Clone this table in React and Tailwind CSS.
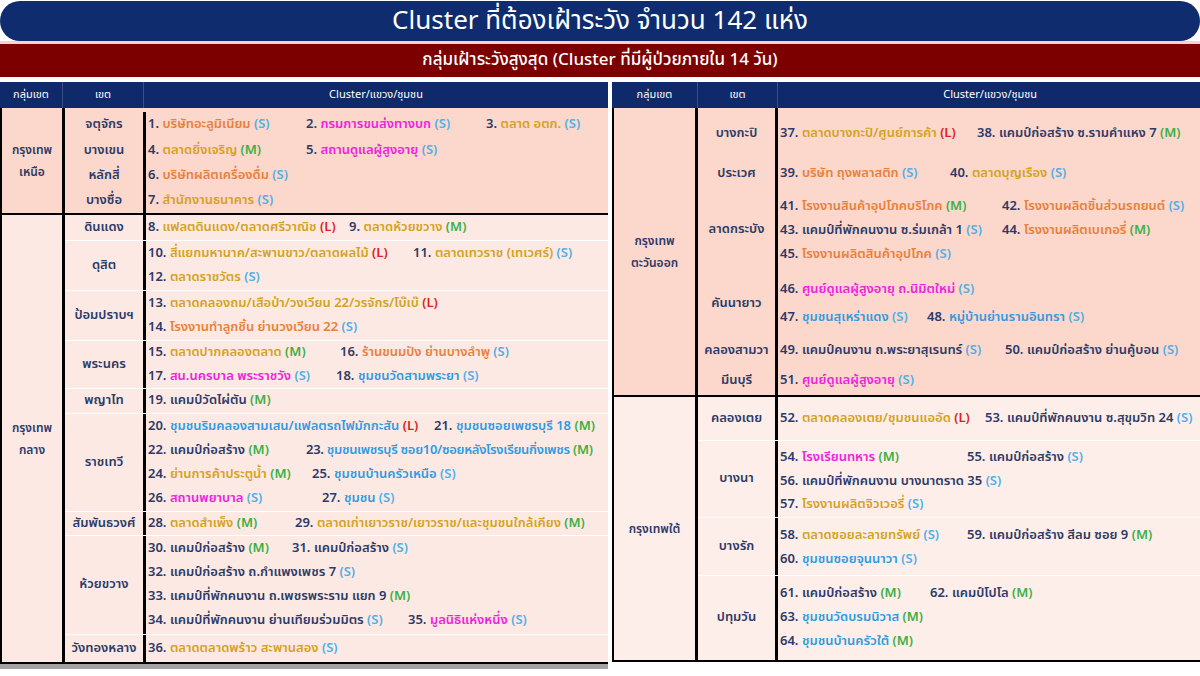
import React from "react";

const col = {
  N: "text-[#2b3a67]",
  O: "text-[#e8803a]",
  P: "text-[#ee22dd]",
  G: "text-[#d4a21c]",
  B: "text-[#2f9be0]",
  S: "text-[#4db0e8]",
  M: "text-[#3cb043]",
  L: "text-[#e02020]",
};

const it = (num, c, name, tag, w = "") => ({ num, c, name, tag, w });

function Item({ d }) {
  return (
    <span className={`inline-block whitespace-nowrap pr-[8px] ${d.w}`}>
      <span className={col.N}>{d.num} </span>
      <span className={col[d.c]}>{d.name}</span>
      <span className={col[d.tag]}> ({d.tag})</span>
    </span>
  );
}

function Row({ label, h, lh, lines, sep, dw, pad = "" }) {
  return (
    <div className={`flex ${h} ${sep ? "border-t border-white" : ""}`}>
      <div className={`${dw} shrink-0 border-r-[3px] border-black flex items-center justify-center text-[#2b3a67] whitespace-nowrap`}>
        {label}
      </div>
      <div className={`flex-1 min-w-0 flex flex-col justify-center pl-[2px] overflow-hidden ${pad}`}>
        {lines.map((l, i) => (
          <div key={i} className={`flex items-center ${lh}`}>
            {l.map((d, j) => (
              <Item key={j} d={d} />
            ))}
          </div>
        ))}
      </div>
    </div>
  );
}

function Group({ label, gw, bg, rows, dw, border, pad = "" }) {
  return (
    <div className={`flex ${bg} ${border}`}>
      <div className={`${gw} shrink-0 border-r-[3px] border-black flex items-center justify-center text-center text-[#2b3a67] text-[12px] leading-[22px]`}>
        {label}
      </div>
      <div className={`flex-1 min-w-0 flex flex-col ${pad}`}>
        {rows.map((r, i) => (
          <Row key={i} {...r} dw={dw} />
        ))}
      </div>
    </div>
  );
}

function Header({ w1, w2 }) {
  return (
    <div className="flex h-[26px] bg-[#0f2a6b] text-white text-[11px]">
      <div className={`${w1} shrink-0 flex items-center justify-center border-r border-[#3b4f85]`}>กลุ่มเขต</div>
      <div className={`${w2} shrink-0 flex items-center justify-center border-r border-[#3b4f85]`}>เขต</div>
      <div className="flex-1 flex items-center justify-center">Cluster/แขวง/ชุมชน</div>
    </div>
  );
}

const north = [
  { label: "จตุจักร", h: "h-[26px]", lh: "h-[26px]", lines: [[it("1.", "O", "บริษัทอะลูมิเนียม", "S", "min-w-[158px]"), it("2.", "P", "กรมการขนส่งทางบก", "S", "min-w-[180px]"), it("3.", "G", "ตลาด อตก.", "S")]] },
  { label: "บางเขน", h: "h-[25px]", lh: "h-[25px]", lines: [[it("4.", "G", "ตลาดยิ่งเจริญ", "M", "min-w-[158px]"), it("5.", "P", "สถานดูแลผู้สูงอายุ", "S")]] },
  { label: "หลักสี่", h: "h-[26px]", lh: "h-[26px]", lines: [[it("6.", "O", "บริษัทผลิตเครื่องดื่ม", "S")]] },
  { label: "บางซื่อ", h: "h-[24px]", lh: "h-[24px]", lines: [[it("7.", "G", "สำนักงานธนาคาร", "S")]] },
];

const central = [
  { label: "ดินแดง", h: "h-[25px]", lh: "h-[24px]", lines: [[it("8.", "G", "แฟลตดินแดง/ตลาดศรีวาณิช", "L", "min-w-[201px]"), it("9.", "G", "ตลาดห้วยขวาง", "M")]] },
  { label: "ดุสิต", h: "h-[50px]", lh: "h-[25px]", sep: true, lines: [[it("10.", "G", "สี่แยกมหานาค/สะพานขาว/ตลาดผลไม้", "L", "min-w-[265px]"), it("11.", "G", "ตลาดเทวราช (เทเวศร์)", "S")], [it("12.", "G", "ตลาดราชวัตร", "S")]] },
  { label: "ป้อมปราบฯ", h: "h-[50px]", lh: "h-[25px]", sep: true, lines: [[it("13.", "G", "ตลาดคลองถม/เสือป่า/วงเวียน 22/วรจักร/โบ๊เบ๊", "L")], [it("14.", "O", "โรงงานทำลูกชิ้น ย่านวงเวียน 22", "S")]] },
  { label: "พระนคร", h: "h-[48px]", lh: "h-[24px]", sep: true, lines: [[it("15.", "G", "ตลาดปากคลองตลาด", "M", "min-w-[192px]"), it("16.", "O", "ร้านขนมปัง ย่านบางลำพู", "S")], [it("17.", "P", "สน.นครบาล พระราชวัง", "S", "min-w-[188px]"), it("18.", "B", "ชุมชนวัดสามพระยา", "S")]] },
  { label: "พญาไท", h: "h-[25px]", lh: "h-[24px]", sep: true, lines: [[it("19.", "N", "แคมป์วัดไผ่ตัน", "M")]] },
  { label: "ราชเทวี", h: "h-[98px]", lh: "h-[24px]", sep: true, lines: [[it("20.", "B", "ชุมชนริมคลองสามเสน/แฟลตรถไฟมักกะสัน", "L", "min-w-[286px]"), it("21.", "B", "ชุมชนซอยเพชรบุรี 18", "M")], [it("22.", "N", "แคมป์ก่อสร้าง", "M", "min-w-[158px]"), it("23.", "B", "ชุมชนเพชรบุรี ซอย10/ซอยหลังโรงเรียนกิ่งเพชร", "M", "tracking-[-0.3px]")], [it("24.", "G", "ย่านการค้าประตูน้ำ", "M", "min-w-[164px]"), it("25.", "B", "ชุมชนบ้านครัวเหนือ", "S")], [it("26.", "P", "สถานพยาบาล", "S", "min-w-[174px]"), it("27.", "B", "ชุมชน", "S")]] },
  { label: "สัมพันธวงศ์", h: "h-[24px]", lh: "h-[23px]", sep: true, lines: [[it("28.", "G", "ตลาดสำเพ็ง", "M", "min-w-[147px]"), it("29.", "G", "ตลาดเก่าเยาวราช/เยาวราช/และชุมชนใกล้เคียง", "M")]] },
  { label: "ห้วยขวาง", h: "h-[99px]", lh: "h-[24px]", sep: true, lines: [[it("30.", "N", "แคมป์ก่อสร้าง", "M", "min-w-[144px]"), it("31.", "N", "แคมป์ก่อสร้าง", "S")], [it("32.", "N", "แคมป์ก่อสร้าง ถ.กำแพงเพชร 7", "S")], [it("33.", "N", "แคมป์ที่พักคนงาน ถ.เพชรพระราม แยก 9", "M")], [it("34.", "N", "แคมป์ที่พักคนงาน ย่านเทียมร่วมมิตร", "S", "min-w-[260px]"), it("35.", "P", "มูลนิธิแห่งหนึ่ง", "S")]] },
  { label: "วังทองหลาง", h: "h-[28px]", lh: "h-[26px]", sep: true, lines: [[it("36.", "G", "ตลาดตลาดพร้าว สะพานสอง", "S")]] },
];

const east = [
  { label: "บางกะปิ", h: "h-[52px]", lh: "h-[24px]", lines: [[it("37.", "G", "ตลาดบางกะปิ/ศูนย์การค้า", "L", "min-w-[197px]"), it("38.", "N", "แคมป์ก่อสร้าง ซ.รามคำแหง 7", "M")]] },
  { label: "ประเวศ", h: "h-[28px]", lh: "h-[24px]", lines: [[it("39.", "O", "บริษัท ถุงพลาสติก", "S", "min-w-[170px]"), it("40.", "G", "ตลาดบุญเรือง", "S")]] },
  { label: "ลาดกระบัง", h: "h-[84px]", lh: "h-[24px]", pad: "pt-[2px]", lines: [[it("41.", "O", "โรงงานสินค้าอุปโภคบริโภค", "M", "min-w-[222px]"), it("42.", "O", "โรงงานผลิตชิ้นส่วนรถยนต์", "S")], [it("43.", "N", "แคมป์ที่พักคนงาน ซ.ร่มเกล้า 1", "S", "min-w-[222px]"), it("44.", "O", "โรงงานผลิตเบเกอรี่", "M")], [it("45.", "O", "โรงงานผลิตสินค้าอุปโภค", "S")]] },
  { label: "คันนายาว", h: "h-[63px]", lh: "h-[28px]", lines: [[it("46.", "P", "ศูนย์ดูแลผู้สูงอายุ ถ.นิมิตใหม่", "S")], [it("47.", "B", "ชุมชนสุเหร่าแดง", "S", "min-w-[147px]"), it("48.", "B", "หมู่บ้านย่านรามอินทรา", "S")]] },
  { label: "คลองสามวา", h: "h-[32px]", lh: "h-[24px]", lines: [[it("49.", "N", "แคมป์คนงาน ถ.พระยาสุเรนทร์", "S", "min-w-[225px]"), it("50.", "N", "แคมป์ก่อสร้าง ย่านคู้บอน", "S")]] },
  { label: "มีนบุรี", h: "h-[28px]", lh: "h-[24px]", lines: [[it("51.", "P", "ศูนย์ดูแลผู้สูงอายุ", "S")]] },
];

const south = [
  { label: "คลองเตย", h: "h-[43px]", lh: "h-[24px]", lines: [[it("52.", "G", "ตลาดคลองเตย/ชุมชนแออัด", "L", "min-w-[205px]"), it("53.", "N", "แคมป์ที่พักคนงาน ซ.สุขุมวิท 24", "S")]] },
  { label: "บางนา", h: "h-[77px]", lh: "h-[24px]", sep: true, pad: "pt-[5px]", lines: [[it("54.", "P", "โรงเรียนทหาร", "M", "min-w-[187px]"), it("55.", "N", "แคมป์ก่อสร้าง", "S")], [it("56.", "N", "แคมป์ที่พักคนงาน บางนาตราด 35", "S")], [it("57.", "G", "โรงงานผลิตจิวเวอรี่", "S")]] },
  { label: "บางรัก", h: "h-[58px]", lh: "h-[24px]", sep: true, pad: "pt-[3px]", lines: [[it("58.", "G", "ตลาดซอยละลายทรัพย์", "S", "min-w-[187px]"), it("59.", "N", "แคมป์ก่อสร้าง สีลม ซอย 9", "M")], [it("60.", "B", "ชุมชนซอยจุนนาวา", "S")]] },
  { label: "ปทุมวัน", h: "h-[85px]", lh: "h-[24px]", sep: true, lines: [[it("61.", "N", "แคมป์ก่อสร้าง", "M", "min-w-[150px]"), it("62.", "N", "แคมป์โปโล", "M")], [it("63.", "B", "ชุมชนวัดบรมนิวาส", "M")], [it("64.", "B", "ชุมชนบ้านครัวใต้", "M")]] },
];

export default function App() {
  return (
    <div
      className="w-[1200px] h-[676px] bg-white overflow-hidden flex flex-col text-[13px]"
      style={{ fontFamily: "Tahoma, 'Noto Sans Thai', 'Noto Sans', 'DejaVu Sans', sans-serif" }}
    >
      <div className="mt-[1px] h-[40px] rounded-full bg-[#0e2c6e] flex items-center justify-center text-white text-[26px]">
        Cluster ที่ต้องเฝ้าระวัง จำนวน 142 แห่ง
      </div>
      <div className="h-[3px] bg-[#f6d3cf]" />
      <div className="h-[33px] bg-[#7c0000] flex items-center justify-center text-white text-[17px] font-medium">
        กลุ่มเฝ้าระวังสูงสุด (Cluster ที่มีผู้ป่วยภายใน 14 วัน)
      </div>
      <div className="h-[5px]" />
      <div className="flex gap-[4px]">
        <div className="w-[608px] shrink-0 flex flex-col">
          <Header w1="w-[63px]" w2="w-[81px]" />
          <div className="border-l-2 border-black border-b-2 font-semibold">
            <Group
              label={<span>กรุงเทพ<br />เหนือ</span>}
              gw="w-[63px]"
              dw="w-[81px]"
              bg="bg-[#fcd7cc]"
              border="border-b-2 border-black"
              pad="pt-[4px]"
              rows={north}
            />
            <Group
              label={<span>กรุงเทพ<br />กลาง</span>}
              gw="w-[63px]"
              dw="w-[81px]"
              bg="bg-[#fde9e3]"
              border=""
              rows={central}
            />
          </div>
          <div className="h-[5px] bg-[#a3a3a3]" />
        </div>
        <div className="flex-1 flex flex-col">
          <Header w1="w-[86px]" w2="w-[80px]" />
          <div className="border-l-2 border-r-2 border-black border-b-2 font-semibold">
            <Group
              label={<span>กรุงเทพ<br />ตะวันออก</span>}
              gw="w-[84px]"
              dw="w-[80px]"
              bg="bg-[#fcd7cc]"
              border="border-b-2 border-black"
              rows={east}
            />
            <Group
              label="กรุงเทพใต้"
              gw="w-[84px]"
              dw="w-[80px]"
              bg="bg-[#fdeeea]"
              border=""
              rows={south}
            />
          </div>
        </div>
      </div>
    </div>
  );
}
